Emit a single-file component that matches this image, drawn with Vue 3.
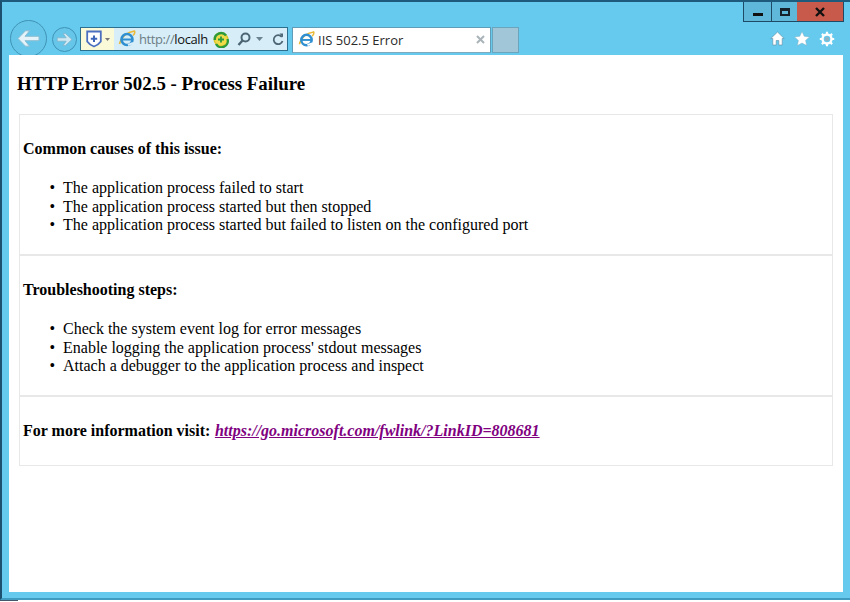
<script setup>
const sections = [
  { title: 'Common causes of this issue:', items: ['The application process failed to start', 'The application process started but then stopped', 'The application process started but failed to listen on the configured port'] },
  { title: 'Troubleshooting steps:', items: ['Check the system event log for error messages', "Enable logging the application process' stdout messages", 'Attach a debugger to the application process and inspect'] }
]
</script>

<template>
  <div class="screen">
    <div class="window">
      <header class="chrome">
        <div class="caption">
          <div class="controls">
            <button class="ctl min"><span class="min-glyph"></span></button>
            <button class="ctl max"><span class="max-glyph"></span></button>
            <button class="ctl close">
              <svg width="12" height="10" viewBox="0 0 12 10"><path d="M2 1l8 8M10 1l-8 8" stroke="#111" stroke-width="2.4" fill="none"/></svg>
            </button>
          </div>
        </div>
        <div class="toolbar">
          <button class="nav back">
            <svg width="23" height="17" viewBox="0 0 23 17"><path d="M8.500 .8L1 8.500l7.500 7.700h4L8 10.700h14V6.300H8L12.500 .8z" fill="#e4f3f9" stroke="#8dbdd1" stroke-width="1"/></svg>
          </button>
          <button class="nav forward">
            <svg width="17" height="13" viewBox="0 0 17 13"><path d="M9.500 .6L16 6.500l-6.500 5.900H7l3.200-4.200H1.200V4.800h9L7 .6z" fill="#cfe9f4" stroke="#7fb3c9" stroke-width=".8"/></svg>
          </button>
          <div class="address">
            <div class="shield-box">
              <svg width="16" height="18" viewBox="0 0 16 18"><path d="M1.200 1.500h13.600v10q-2.500 3.500-6.800 5q-4.300-1.500-6.800-5z" fill="#fff" stroke="#4a6fc0" stroke-width="1.800"/><path d="M8 5.500v6.500M4.800 8.700h6.400" stroke="#3c64b8" stroke-width="2"/></svg>
              <svg class="caret" width="5" height="3" viewBox="0 0 5 3"><path d="M0 0h5L2.500 3z" fill="#777"/></svg>
            </div>
            <svg class="ie" width="18" height="18" viewBox="0 0 18 18">
              <path d="M1.500 14C3 7 9 2 16.500 1c1 2-.5 3.500-1.500 4.500" stroke="#e9b93a" stroke-width="1.600" fill="none"/>
              <circle cx="9" cy="9.500" r="5.500" fill="none" stroke="#2f8fd0" stroke-width="2.600"/>
              <path d="M4 9.500h10" stroke="#2f8fd0" stroke-width="2"/>
              <path d="M10 15l5-2" stroke="#d9eef8" stroke-width="2"/>
            </svg>
            <span class="url"><span class="scheme">http://</span>localh</span>
            <svg class="addon" width="18" height="17" viewBox="0 0 18 17"><circle cx="9" cy="8.500" r="6.800" fill="#f0dc4a" stroke="#d8c52c" stroke-width="1.400"/><path d="M2.800 9A6.300 6.300 0 0 1 14 4.500M15.500 8A6.300 6.300 0 0 1 4 13" fill="none" stroke="#2a9a3c" stroke-width="2.400"/><path d="M9 5.500v6M6 8.500h6" stroke="#2a9a3c" stroke-width="1.800"/></svg>
            <svg class="search" width="14" height="15" viewBox="0 0 14 15"><circle cx="8.500" cy="5.500" r="4" fill="none" stroke="#4d6675" stroke-width="2"/><path d="M5.500 8.500L1.500 13" stroke="#4d6675" stroke-width="2.400"/></svg>
            <svg class="caret2" width="7" height="4" viewBox="0 0 7 4"><path d="M0 0h7L3.500 4z" fill="#6b8390"/></svg>
            <svg class="refresh" width="12" height="13" viewBox="0 0 12 13"><path d="M9.800 4A4.500 4.500 0 1 0 10.500 8" fill="none" stroke="#4d6675" stroke-width="1.800"/><path d="M7.500 0.500h3.500v4z" fill="#4d6675"/></svg>
          </div>
          <div class="tab">
            <svg class="ie" width="17" height="17" viewBox="0 0 18 18">
              <path d="M1.500 14C3 7 9 2 16.500 1c1 2-.5 3.500-1.500 4.500" stroke="#e9b93a" stroke-width="1.600" fill="none"/>
              <circle cx="9" cy="9.500" r="5.500" fill="none" stroke="#2f8fd0" stroke-width="2.600"/>
              <path d="M4 9.500h10" stroke="#2f8fd0" stroke-width="2"/>
              <path d="M10 15l5-2" stroke="#fff" stroke-width="2"/>
            </svg>
            <span class="tab-title">IIS 502.5 Error</span>
            <svg class="tab-x" width="9" height="9" viewBox="0 0 9 9"><path d="M1 1l7 7M8 1L1 8" stroke="#a9b3b8" stroke-width="2"/></svg>
          </div>
          <div class="newtab"></div>
          <div class="tools">
            <svg width="15" height="15" viewBox="0 0 15 15"><path d="M7.500 1L0.800 7.500h2V14h3.400V9.500h2.600V14h3.400V7.500h2z" fill="#fff" stroke="#5a8ba3" stroke-width=".6"/></svg>
            <svg width="16" height="15" viewBox="0 0 16 15"><path d="M8 0.500l2.200 4.800 5.300.6-3.900 3.500 1.100 5.200L8 12l-4.700 2.600 1.100-5.200L.5 5.900l5.300-.6z" fill="#fff" stroke="#7fb3c9" stroke-width=".5"/></svg>
            <svg width="16" height="16" viewBox="0 0 16 16"><circle cx="8" cy="8" r="4.500" fill="none" stroke="#fff" stroke-width="2.400"/><path d="M8 .8v3M8 12.200v3M.8 8h3M12.200 8h3M2.900 2.900l2.100 2.100M11 11l2.100 2.100M13.100 2.900L11 5M5 11l-2.100 2.100" stroke="#fff" stroke-width="2.200"/><circle cx="8" cy="8" r="2.200" fill="#8fb4c4"/></svg>
          </div>
        </div>
      </header>
      <main class="page">
        <h1>HTTP Error 502.5 - Process Failure</h1>
        <div class="panel">
          <section v-for="s in sections" :key="s.title" class="block">
            <h3>{{ s.title }}</h3>
            <ul>
              <li v-for="i in s.items" :key="i">{{ i }}</li>
            </ul>
          </section>
          <section class="block last">
            <h3>For more information visit: <a href="#" class="link">https://go.microsoft.com/fwlink/?LinkID=808681</a></h3>
          </section>
        </div>
      </main>
    </div>
    <div class="taskbar-edge"></div>
  </div>
</template>

<style scoped>
.screen {
  width: 850px;
  height: 602px;
  overflow: hidden;
  background: #fff;
}
.window {
  width: 850px;
  height: 600px;
  box-sizing: border-box;
  background: #66caee;
  border-left: 2px solid #1d4f6e;
  border-top: 2px solid #1d5a7c;
  border-bottom: 2px solid #3f9cc0;
  padding: 0 7px 6px 7px;
  display: flex;
  flex-direction: column;
  font-family: "Liberation Serif", serif;
}
.taskbar-edge {
  width: 18px;
  height: 1px;
  background: #44586a;
}
.chrome {
  height: 53px;
  flex: none;
  display: flex;
  flex-direction: column;
  margin: 0 -7px;
}
.caption {
  height: 20px;
  display: flex;
  justify-content: flex-end;
  padding-right: 6px;
}
.controls {
  display: flex;
  height: 19px;
  border: 1px solid #1f4a66;
  border-top: none;
}
.ctl {
  border: none;
  padding: 0;
  background: #5fb8da;
  display: flex;
  align-items: center;
  justify-content: center;
}
.min { width: 28px; border-right: 1px solid #1f4a66; }
.max { width: 25px; border-right: 0; }
.close { width: 46px; background: #c85a4c; }
.min-glyph { width: 10px; height: 3px; background: #111; margin-top: 6px; }
.max-glyph { width: 10px; height: 8px; box-sizing: border-box; border: 2px solid #15222c; border-top-width: 3px; }
.toolbar {
  height: 33px;
  display: flex;
  align-items: center;
  padding-left: 8px;
}
.nav {
  border: 1px solid #3f93b5;
  border-radius: 50%;
  background: #66c6ea;
  padding: 0;
  box-sizing: border-box;
  display: flex;
  align-items: center;
  justify-content: center;
  flex: none;
}
.back { width: 37px; height: 37px; }
.forward { width: 25px; height: 25px; margin-left: 5px; margin-top: 1px; }
.address {
  width: 208px;
  height: 24px;
  margin-left: 3px;
  margin-top: 1px;
  box-sizing: border-box;
  flex: none;
  border: 1px solid #2c6f8e;
  background: #d7eef8;
  display: flex;
  align-items: center;
}
.shield-box {
  height: 22px;
  width: 33px;
  background: #fbfad8;
  display: flex;
  align-items: center;
  padding-left: 5px;
  box-sizing: border-box;
  gap: 3px;
  flex: none;
}
.ie { flex: none; }
.address .ie { margin-left: 4px; }
.url {
  margin-left: 3px;
  font: 13px "Open Sans", sans-serif;
  letter-spacing: -.4px;
  color: #111;
  width: 70px;
  white-space: nowrap;
  flex: none;
}
.scheme { color: #6d7d85; }
.addon { margin-left: 3px; flex: none; }
.search { margin-left: 7px; flex: none; }
.caret2 { margin-left: 5px; flex: none; }
.refresh { margin-left: 9px; flex: none; }
.tab {
  width: 199px;
  height: 26px;
  margin-left: 4px;
  margin-top: 2px;
  box-sizing: border-box;
  background: #fff;
  border: 1px solid #5f9cb8;
  border-bottom: 1px solid #7fa9bc;
  display: flex;
  align-items: center;
  padding: 0 5px;
  flex: none;
}
.tab-title {
  font: 13px "Open Sans", sans-serif;
  color: #2a2a2a;
  margin-left: 3px;
  flex: 1;
}
.tab-x { flex: none; }
.newtab {
  width: 27px;
  height: 26px;
  margin-left: 1px;
  margin-top: 3px;
  box-sizing: border-box;
  background: #a0c6d7;
  border: 1px solid #6aa4bd;
  flex: none;
}
.tools {
  margin-left: auto;
  padding-right: 15px;
  display: flex;
  align-items: center;
  gap: 9px;
}
.page {
  flex: 1;
  position: relative;
  background: #fff;
  padding: 18px 8px 0;
  min-height: 0;
}
h1 {
  font-size: 18.9px;
  font-weight: bold;
  margin: 0 0 19px;
  line-height: 22px;
  color: #000;
}
.panel {
  margin: 0 2px;
}
.block {
  border: 1px solid #e8e8e8;
  padding: 25px 4px 19.5px 3px;
}
.last { padding-bottom: 25px; }
h3 {
  font-size: 16px;
  font-weight: bold;
  margin: 0;
  line-height: 18px;
  color: #000;
}
ul {
  margin: 21px 0 0;
  padding-left: 40px;
  font-size: 16px;
  color: #000;
  list-style-type: "•\2002";
}
li { line-height: 18.5px; }
.link {
  color: #800080;
  font-style: italic;
  text-decoration: underline;
  margin-left: .5px;
}
</style>

<style>
html, body { margin: 0; background: #fff; overflow: hidden; }
</style>
